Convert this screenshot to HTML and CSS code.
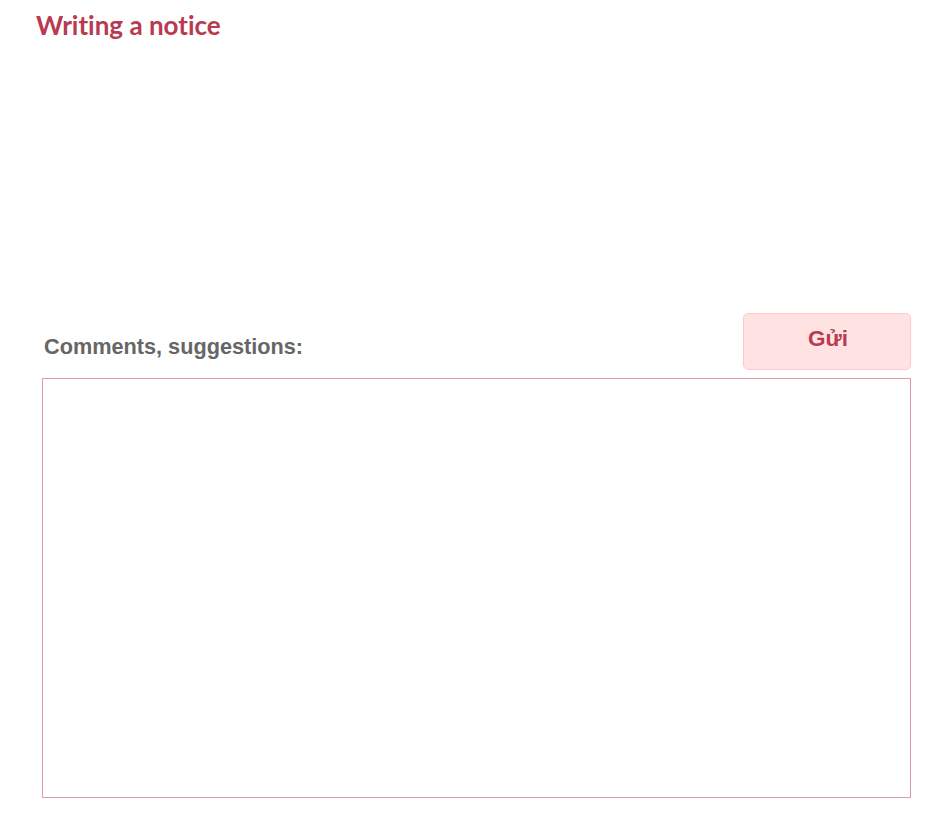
FILE: index.html
```html
<!DOCTYPE html>
<html lang="en">
<head>
<meta charset="utf-8">
<title>Writing a notice</title>
<link rel="stylesheet" href="styles.css">
</head>
<body>
<main class="page">
  <h1 class="title">Writing a notice</h1>
  <div class="notice-body"></div>
  <form class="feedback">
    <div class="feedback-head">
      <label class="feedback-label" for="comments">Comments, suggestions:</label>
      <button type="button" class="send-btn">Gửi</button>
    </div>
    <textarea id="comments" class="feedback-input"></textarea>
  </form>
</main>
</body>
</html>
```

FILE: styles.css
```css
html, body {
  margin: 0;
  padding: 0;
  background: #ffffff;
}

.page {
  padding: 8px 29px 0 36px;
}

.title {
  margin: 0;
  font-family: Lato, "Noto Sans", sans-serif;
  font-weight: 700;
  font-size: 26px;
  line-height: 34px;
  color: #b83a4f;
  font-variant-ligatures: none;
}

.notice-body {
  height: 271px;
}

.feedback {
  padding-left: 6px;
}

.feedback-head {
  display: flex;
  justify-content: space-between;
  align-items: flex-end;
  margin-bottom: 8px;
}

.feedback-label {
  font-family: "Liberation Sans", Arial, sans-serif;
  font-weight: 700;
  font-size: 21.7px;
  line-height: 24px;
  color: #666666;
  padding-left: 2px;
  margin-bottom: 11px;
}

.send-btn {
  width: 168px;
  height: 57px;
  border: 1px solid #ffc8cf;
  border-radius: 5px;
  background: #ffe3e3;
  color: #b83a4f;
  font-family: "Liberation Sans", Arial, sans-serif;
  font-weight: 700;
  font-size: 22.5px;
  padding: 0 0 6px 2px;
}

.feedback-input {
  display: block;
  box-sizing: border-box;
  width: 869px;
  height: 420px;
  margin: 0;
  border: 1px solid #de9aa9;
  background: #ffffff;
  resize: none;
  padding: 4px;
}
```
